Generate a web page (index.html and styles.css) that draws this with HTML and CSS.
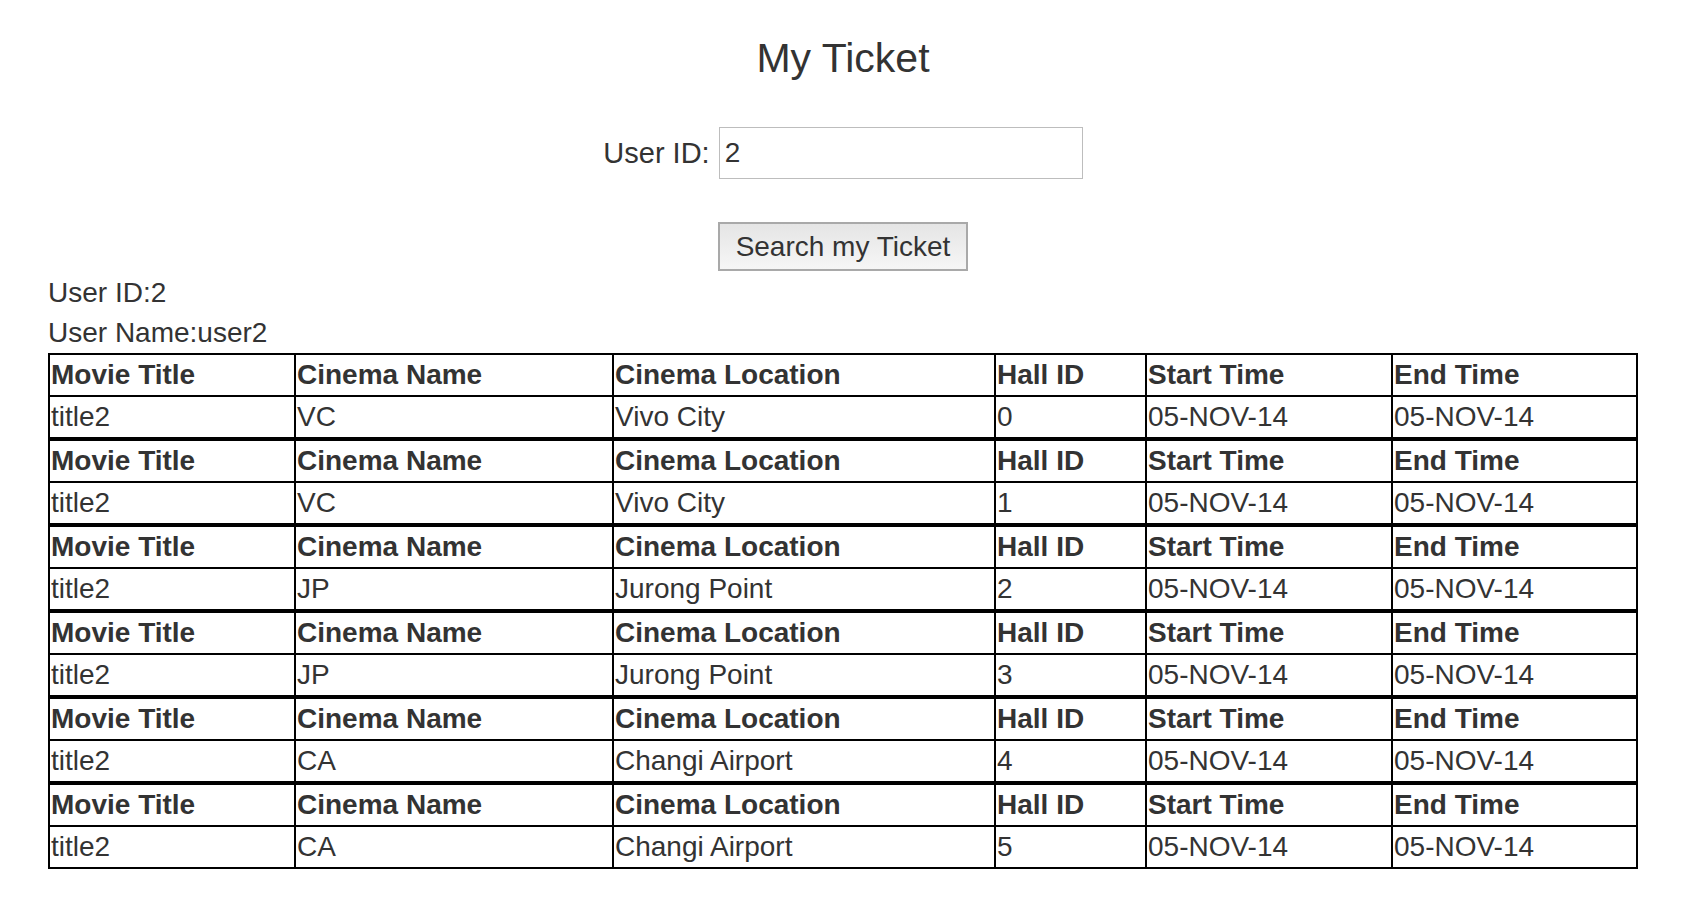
FILE: index.html
```html
<!DOCTYPE html>
<html>
<head>
<meta charset="utf-8">
<title>My Ticket</title>
<link rel="stylesheet" href="styles.css">
</head>
<body>
<div class="page">
  <h1 class="title">My Ticket</h1>
  <form class="search">
    <div class="field">
      <label class="label" for="uid">User ID:</label>
      <input class="input" id="uid" type="text" value="2">
    </div>
    <button class="btn" type="button">Search my Ticket</button>
  </form>
  <div class="user">
    <div class="info">User ID:2</div>
    <div class="info">User Name:user2</div>
  </div>
  <table class="ticket">
    <tr><th class="c1">Movie Title</th><th class="c2">Cinema Name</th><th class="c3">Cinema Location</th><th class="c4">Hall ID</th><th class="c5">Start Time</th><th class="c6">End Time</th></tr>
    <tr><td>title2</td><td>VC</td><td>Vivo City</td><td>0</td><td>05-NOV-14</td><td>05-NOV-14</td></tr>
  </table>
  <table class="ticket">
    <tr><th class="c1">Movie Title</th><th class="c2">Cinema Name</th><th class="c3">Cinema Location</th><th class="c4">Hall ID</th><th class="c5">Start Time</th><th class="c6">End Time</th></tr>
    <tr><td>title2</td><td>VC</td><td>Vivo City</td><td>1</td><td>05-NOV-14</td><td>05-NOV-14</td></tr>
  </table>
  <table class="ticket">
    <tr><th class="c1">Movie Title</th><th class="c2">Cinema Name</th><th class="c3">Cinema Location</th><th class="c4">Hall ID</th><th class="c5">Start Time</th><th class="c6">End Time</th></tr>
    <tr><td>title2</td><td>JP</td><td>Jurong Point</td><td>2</td><td>05-NOV-14</td><td>05-NOV-14</td></tr>
  </table>
  <table class="ticket">
    <tr><th class="c1">Movie Title</th><th class="c2">Cinema Name</th><th class="c3">Cinema Location</th><th class="c4">Hall ID</th><th class="c5">Start Time</th><th class="c6">End Time</th></tr>
    <tr><td>title2</td><td>JP</td><td>Jurong Point</td><td>3</td><td>05-NOV-14</td><td>05-NOV-14</td></tr>
  </table>
  <table class="ticket">
    <tr><th class="c1">Movie Title</th><th class="c2">Cinema Name</th><th class="c3">Cinema Location</th><th class="c4">Hall ID</th><th class="c5">Start Time</th><th class="c6">End Time</th></tr>
    <tr><td>title2</td><td>CA</td><td>Changi Airport</td><td>4</td><td>05-NOV-14</td><td>05-NOV-14</td></tr>
  </table>
  <table class="ticket">
    <tr><th class="c1">Movie Title</th><th class="c2">Cinema Name</th><th class="c3">Cinema Location</th><th class="c4">Hall ID</th><th class="c5">Start Time</th><th class="c6">End Time</th></tr>
    <tr><td>title2</td><td>CA</td><td>Changi Airport</td><td>5</td><td>05-NOV-14</td><td>05-NOV-14</td></tr>
  </table>
</div>
</body>
</html>
```
FILE: styles.css
```css
* {
  box-sizing: border-box;
}

body {
  margin: 0;
  background: #fff;
  font-family: "Liberation Sans", Arial, Helvetica, sans-serif;
  font-size: 28px;
  color: #333;
}

.page {
  margin-left: 48px;
  width: 1590px;
}

.title {
  margin: 35px 0 0;
  font-size: 41px;
  font-weight: normal;
  line-height: 46px;
  text-align: center;
}

.search {
  display: flex;
  flex-direction: column;
  align-items: center;
  margin: 46px 0 0;
}

.field {
  display: flex;
  align-items: center;
  gap: 9px;
}

.label {
  font-size: 29px;
  line-height: 32px;
}

.input {
  width: 364px;
  height: 52px;
  margin: 0;
  border: 1px solid #bdbdbd;
  padding: 0 5px;
  font: inherit;
  color: #333;
  background: #fff;
  outline: none;
}

.btn {
  margin-top: 43px;
  height: 49px;
  padding: 0 16px;
  border: 2px solid #a9a9a9;
  border-radius: 0;
  background: linear-gradient(#e5e5e5, #f6f6f6);
  font: inherit;
  color: #333;
}

.user {
  margin-top: 2px;
}

.info {
  line-height: 40px;
}

.ticket {
  width: 1590px;
  table-layout: fixed;
  border-collapse: separate;
  border-spacing: 0;
  border-top: 2px solid #000;
  border-left: 2px solid #000;
}

.ticket th,
.ticket td {
  border-right: 2px solid #000;
  border-bottom: 2px solid #000;
  padding: 0 1px;
  line-height: 40px;
  text-align: left;
  vertical-align: middle;
  white-space: nowrap;
  overflow: hidden;
}

.ticket th {
  font-weight: bold;
}

.c1 { width: 246px; }
.c2 { width: 318px; }
.c3 { width: 382px; }
.c4 { width: 151px; }
.c5 { width: 246px; }
.c6 { width: 245px; }
```
